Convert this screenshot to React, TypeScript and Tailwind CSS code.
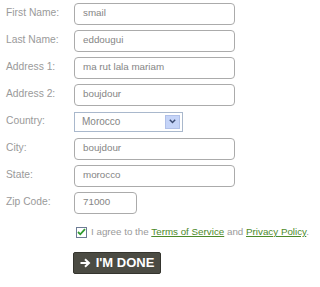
import React from "react";

const rows: { label: string; value: string; kind?: "select" | "zip" }[] = [
  { label: "First Name:", value: "smail" },
  { label: "Last Name:", value: "eddougui" },
  { label: "Address 1:", value: "ma rut lala mariam" },
  { label: "Address 2:", value: "boujdour" },
  { label: "Country:", value: "Morocco", kind: "select" },
  { label: "City:", value: "boujdour" },
  { label: "State:", value: "morocco" },
  { label: "Zip Code:", value: "71000", kind: "zip" },
];

export default function App() {
  return (
    <div
      className="w-[320px] h-[287px] bg-white overflow-hidden pt-[3px]"
      style={{ fontFamily: '"Liberation Sans", Arial, sans-serif' }}
    >
      <div className="flex flex-col gap-[6px]">
        {rows.map((r) => (
          <div key={r.label} className="flex items-center h-[21px]">
            <div className="w-[74px] pl-[6px] text-[10.3px] text-[#9a9a9a] leading-none">
              {r.label}
            </div>
            {r.kind === "select" ? (
              <div className="w-[109px] h-[20px] border border-[#a9b8cc] flex items-center justify-between pl-[7px] pr-[2px]">
                <span className="text-[10px] text-[#858585]">{r.value}</span>
                <div className="w-[15px] h-[14px] bg-[#c5d4f8] border border-[#b0c0e8] flex items-center justify-center">
                  <svg width="7" height="5" viewBox="0 0 7 5">
                    <path d="M0.8 0.8 L3.5 3.6 L6.2 0.8" stroke="#3a4a70" strokeWidth="1.4" fill="none" />
                  </svg>
                </div>
              </div>
            ) : (
              <div
                className={`${r.kind === "zip" ? "w-[63px]" : "w-[161px]"} h-[22px] border border-[#ababab] rounded-[4px] flex items-center pl-[8px]`}
              >
                <span className="text-[9.8px] text-[#858585]">{r.value}</span>
              </div>
            )}
          </div>
        ))}
      </div>
      <div className="flex items-center ml-[76px] mt-[12px] text-[9.8px] text-[#9a9a9a] whitespace-nowrap">
        <div className="w-[11px] h-[11px] border border-[#6d7c95] bg-white flex items-center justify-center mr-[4px]">
          <svg width="9" height="8" viewBox="0 0 9 8">
            <path d="M1 4 L3.3 6.3 L8 1.2" stroke="#2f9b2f" strokeWidth="1.8" fill="none" />
          </svg>
        </div>
        <span>
          I agree to the{" "}
          <span className="text-[#4d8a2a] underline">Terms of Service</span> and{" "}
          <span className="text-[#4d8a2a] underline">Privacy Policy</span>.
        </span>
      </div>
      <div className="ml-[73px] mt-[12px] w-[88px] h-[22px] bg-[#4b4b43] rounded-[2px] border border-[#34342e] flex items-center justify-center gap-[5px]">
        <svg width="11" height="10" viewBox="0 0 11 10">
          <path d="M0.5 5 H8.5 M5 1.2 L9 5 L5 8.8" stroke="#fff" strokeWidth="2" fill="none" />
        </svg>
        <span className="text-white font-bold text-[13px] leading-none">I'M DONE</span>
      </div>
    </div>
  );
}
